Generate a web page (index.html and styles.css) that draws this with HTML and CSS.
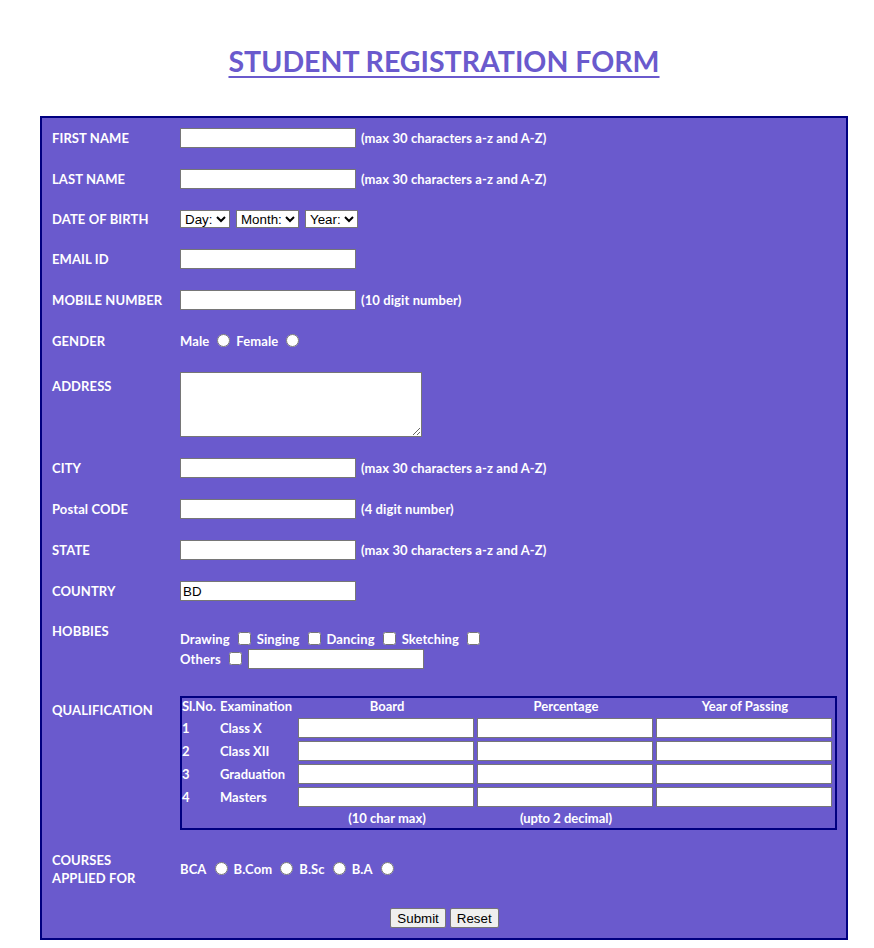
FILE: index.html
```html
<!DOCTYPE html>
<html lang="en">
<head>
<meta charset="utf-8">
<title>Student Registration Form</title>
<link rel="stylesheet" href="styles.css">
</head>
<body>
<div class="page">
  <h1 class="title">STUDENT REGISTRATION FORM</h1>
  <form class="form">
    <div class="label">FIRST NAME</div>
    <div class="field"><input class="text" type="text" maxlength="30"><span class="hint">(max 30 characters a-z and A-Z)</span></div>

    <div class="label">LAST NAME</div>
    <div class="field"><input class="text" type="text" maxlength="30"><span class="hint">(max 30 characters a-z and A-Z)</span></div>

    <div class="label">DATE OF BIRTH</div>
    <div class="field dob">
      <select class="sel"><option>Day:</option></select>
      <select class="sel"><option>Month:</option></select>
      <select class="sel"><option>Year:</option></select>
    </div>

    <div class="label">EMAIL ID</div>
    <div class="field"><input class="text" type="text"></div>

    <div class="label">MOBILE NUMBER</div>
    <div class="field"><input class="text" type="text" maxlength="10"><span class="hint">(10 digit number)</span></div>

    <div class="label">GENDER</div>
    <div class="field"><span>Male</span><input type="radio" name="g"><span>Female</span><input type="radio" name="g"></div>

    <div class="label label-top">ADDRESS</div>
    <div class="field"><textarea class="area"></textarea></div>

    <div class="label">CITY</div>
    <div class="field"><input class="text" type="text" maxlength="30"><span class="hint">(max 30 characters a-z and A-Z)</span></div>

    <div class="label">Postal CODE</div>
    <div class="field"><input class="text" type="text" maxlength="4"><span class="hint">(4 digit number)</span></div>

    <div class="label">STATE</div>
    <div class="field"><input class="text" type="text" maxlength="30"><span class="hint">(max 30 characters a-z and A-Z)</span></div>

    <div class="label">COUNTRY</div>
    <div class="field"><input class="text" type="text" value="BD"></div>

    <div class="label hobby-label">HOBBIES</div>
    <div class="hobbies">
      <div class="line"><span>Drawing</span><input type="checkbox"><span>Singing</span><input type="checkbox"><span>Dancing</span><input type="checkbox"><span>Sketching</span><input type="checkbox"></div>
      <div class="line"><span>Others</span><input type="checkbox"><input class="text other" type="text"></div>
    </div>

    <div class="label qual-label">QUALIFICATION</div>
    <div class="qual-field">
      <div class="qual">
        <div class="th left">Sl.No.</div>
        <div class="th left">Examination</div>
        <div class="th">Board</div>
        <div class="th">Percentage</div>
        <div class="th">Year of Passing</div>

        <div class="td">1</div><div class="td">Class X</div>
        <input class="cell" type="text"><input class="cell" type="text"><input class="cell" type="text">

        <div class="td">2</div><div class="td">Class XII</div>
        <input class="cell" type="text"><input class="cell" type="text"><input class="cell" type="text">

        <div class="td">3</div><div class="td">Graduation</div>
        <input class="cell" type="text"><input class="cell" type="text"><input class="cell" type="text">

        <div class="td">4</div><div class="td">Masters</div>
        <input class="cell" type="text"><input class="cell" type="text"><input class="cell" type="text">

        <div class="td"></div><div class="td"></div>
        <div class="th">(10 char max)</div>
        <div class="th">(upto 2 decimal)</div>
        <div class="td"></div>
      </div>
    </div>

    <div class="label">COURSES<br>APPLIED FOR</div>
    <div class="field"><span>BCA</span><input type="radio" name="c"><span>B.Com</span><input type="radio" name="c"><span>B.Sc</span><input type="radio" name="c"><span>B.A</span><input type="radio" name="c"></div>

    <div class="actions">
      <input class="btn" type="submit" value="Submit">
      <input class="btn" type="reset" value="Reset">
    </div>
  </form>
</div>
</body>
</html>
```
FILE: styles.css
```css
html, body {
  margin: 0;
  padding: 0;
  background: #ffffff;
}

.page {
  width: 808px;
  margin-left: 40px;
  font-family: Lato, "Liberation Sans", sans-serif;
}

.title {
  margin: 42px 0 36px;
  font-size: 28.5px;
  line-height: 38px;
  font-weight: 700;
  text-align: center;
  color: #6a5acd;
  text-decoration: underline;
  text-decoration-thickness: 2px;
  text-underline-offset: 4px;
}

.form {
  display: grid;
  grid-template-columns: 128px 1fr;
  row-gap: 21px;
  align-items: center;
  margin: 0;
  padding: 10px 10px 10px 10px;
  background: #6a5acd;
  border: 2px solid #000080;
  color: #ffffff;
  font-size: 13px;
  font-weight: 700;
  line-height: 18px;
  letter-spacing: 0.1px;
}

.label {
  align-self: center;
}

.label-top {
  align-self: start;
  margin-top: 5px;
}

.field {
  display: flex;
  align-items: center;
  min-height: 20px;
}

.dob {
  min-height: 18px;
}

.text {
  box-sizing: border-box;
  width: 176px;
  height: 20px;
  margin: 0;
  padding: 1px 2px;
  border: 1px solid #767676;
  background: #fff;
  font-family: "Liberation Sans", Arial, sans-serif;
  font-size: 13.33px;
  letter-spacing: 0;
  color: #000;
}

.hint {
  margin-left: 5px;
}

.sel {
  height: 18px;
  margin: 0 6px 0 0;
  padding: 0;
  font-family: "Liberation Sans", Arial, sans-serif;
  font-size: 13.33px;
  letter-spacing: 0;
  background: #fff;
  color: #000;
  border: 1px solid #767676;
  border-radius: 0;
}

.area {
  box-sizing: border-box;
  width: 242px;
  height: 65px;
  margin: 0;
  border: 1px solid #767676;
  background: #fff;
}

input[type="radio"],
input[type="checkbox"] {
  width: 13px;
  height: 13px;
  margin: 0 6px 2px 8px;
}

.hobby-label {
  align-self: start;
}

.hobbies {
  align-self: start;
  padding-top: 7px;
}

.hobbies .line {
  display: flex;
  align-items: center;
  height: 20px;
}

.other {
  margin-left: 0;
}

.qual-label {
  align-self: start;
  margin-top: 11px;
}

.qual-field {
  margin-top: 6px;
}

.qual {
  display: grid;
  grid-template-columns: 37px 77px 178px 178px 178px;
  grid-template-rows: 17px 20px 20px 20px 20px 17px;
  column-gap: 1px;
  row-gap: 3px;
  padding: 0 1px 1px 0;
  border: 2px solid #000080;
  line-height: 17px;
  letter-spacing: 0;
  white-space: nowrap;
}

.qual .th {
  text-align: center;
}

.qual .th.left {
  text-align: left;
}

.qual .td {
  align-self: center;
}

.cell {
  box-sizing: border-box;
  width: 176px;
  height: 20px;
  margin: 0;
  border: 1px solid #767676;
  background: #fff;
}

.actions {
  grid-column: 1 / -1;
  display: flex;
  justify-content: center;
  gap: 4px;
}

.btn {
  height: 20px;
  margin: 0;
  padding: 1px 6px;
  font-family: "Liberation Sans", Arial, sans-serif;
  font-size: 13.33px;
  letter-spacing: 0;
  background: #efefef;
  border: 1px solid #767676;
  border-radius: 2px;
  color: #000;
}
```
